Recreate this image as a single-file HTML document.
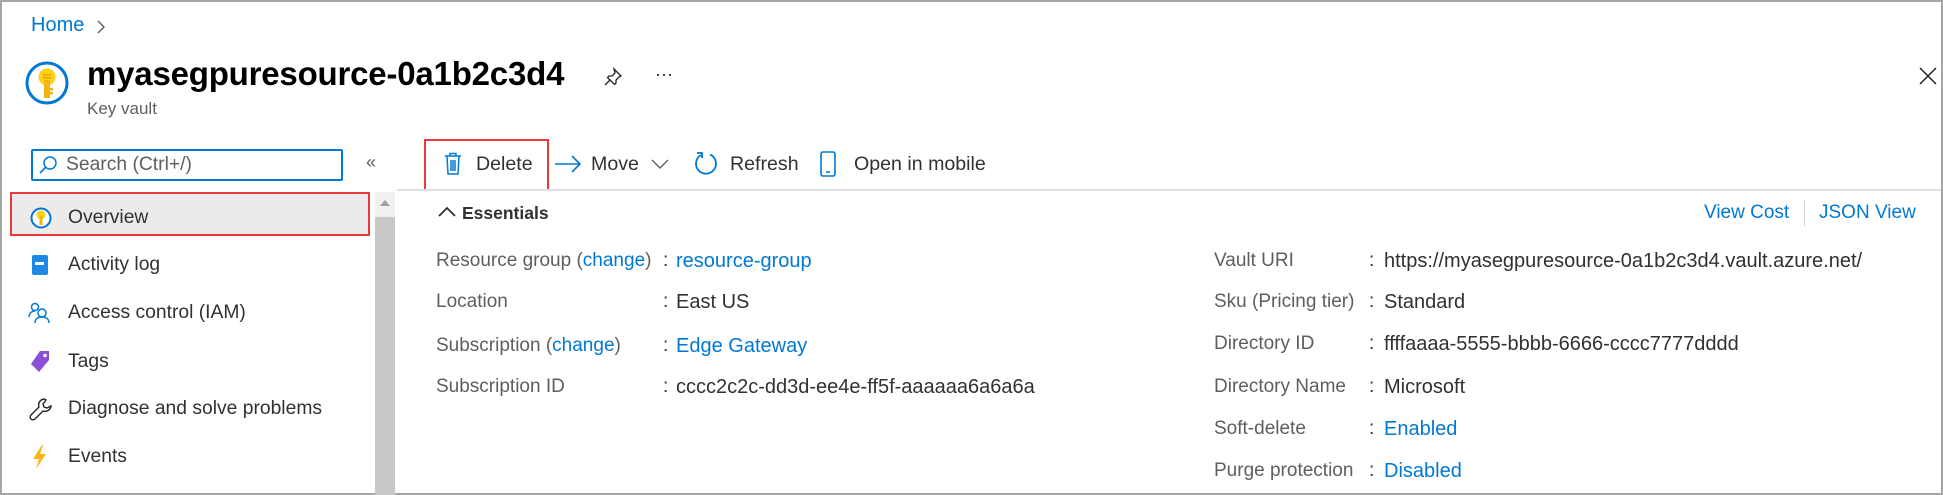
<!DOCTYPE html>
<html><head><meta charset="utf-8"><style>
*{margin:0;padding:0;box-sizing:border-box}
body{width:1943px;height:495px;overflow:hidden;background:#fff;font-family:"Liberation Sans",sans-serif;color:#323130;position:relative}
.a{position:absolute;white-space:nowrap}
.frame{position:absolute;left:0;top:0;width:1943px;height:495px;border:2px solid #a6a6a6}
.t{font-size:19px;line-height:24px;transform:translateY(-12px)}
.p{font-size:19px}
.v{font-size:20px}
.lbl{color:#605e5c}
.lnk{color:#0078d4}
</style></head><body>
<div class="frame"></div>
<div class="a lnk" style="left:31px;top:14px;font-size:20px">Home</div>
<svg class="a" style="left:96px;top:19px" width="10" height="16"><path d="M2 2l6 6-6 6" stroke="#605e5c" stroke-width="1.4" fill="none"/></svg>

<svg class="a" style="left:24px;top:60px" width="46" height="46" viewBox="0 0 46 46"><circle cx="23" cy="23" r="20" fill="#fff" stroke="#0078d4" stroke-width="3"/><circle cx="23" cy="17" r="8.5" fill="#fcd116"/><rect x="20" y="20" width="6" height="18" fill="#f2b515"/><rect x="26" y="28" width="3" height="2.5" fill="#f2b515"/><rect x="26" y="32" width="3" height="2.5" fill="#f2b515"/><rect x="19" y="14" width="8" height="1.5" fill="#e8a100"/><rect x="19" y="17" width="8" height="1.5" fill="#e8a100"/></svg>
<div class="a" style="left:87px;top:55px;font-size:33px;font-weight:bold;color:#000;letter-spacing:-0.2px">myasegpuresource-0a1b2c3d4</div>
<svg class="a" style="left:603px;top:67px" width="20" height="20" viewBox="0 0 20 20"><path d="M11 2l7 7-2 1-3 3 0 3-1.5 1.5-7-7L6 9l3 0 3-3z M7.5 12.5L2 18" stroke="#222" stroke-width="1.3" fill="none"/></svg>
<div class="a" style="left:655px;top:64px;font-size:18px;color:#222">···</div>
<div class="a" style="left:87px;top:99px;font-size:17px;color:#605e5c">Key vault</div>
<svg class="a" style="left:1918px;top:66px" width="20" height="20"><path d="M2 2l16 16M18 2L2 18" stroke="#222" stroke-width="1.5"/></svg>

<div class="a" style="left:31px;top:149px;width:312px;height:32px;border:2px solid #0078d4;border-radius:2px"></div>
<svg class="a" style="left:38px;top:155px" width="20" height="20"><circle cx="12" cy="8" r="6" stroke="#0078d4" stroke-width="1.5" fill="none"/><path d="M8 12l-6 6" stroke="#0078d4" stroke-width="1.6"/></svg>
<div class="a" style="left:66px;top:152px;font-size:19.3px;color:#605e5c;line-height:26px">Search (Ctrl+/)</div>
<div class="a" style="left:366px;top:152px;font-size:18px;color:#605e5c">«</div>

<div class="a" style="left:10px;top:192px;width:360px;height:44px;background:#edebe9;border:2px solid #e8393c"></div>
<div class="a" style="left:375px;top:192px;width:20px;height:303px;background:#c8c8c8"></div>
<div class="a" style="left:375px;top:192px;width:20px;height:25px;background:#f0f0f0"></div>
<svg class="a" style="left:379px;top:198px" width="12" height="10"><path d="M1 8h10L6 2z" fill="#a0a0a0"/></svg>

<svg class="a" style="left:30px;top:206px" width="22" height="24" viewBox="0 0 22 24"><circle cx="11" cy="12" r="9.5" fill="#fff" stroke="#0078d4" stroke-width="2"/><circle cx="11" cy="9" r="4.5" fill="#fcd116"/><rect x="9.5" y="10" width="3" height="9" fill="#f2b515"/></svg>
<div class="a t" style="left:68px;top:218px;font-size:19.3px">Overview</div>
<svg class="a" style="left:31px;top:254px" width="18" height="22"><rect x="1" y="1" width="16" height="20" rx="2" fill="#1e88e5"/><rect x="4" y="8" width="9" height="3" fill="#fff"/></svg>
<div class="a t" style="left:68px;top:265px;font-size:19.3px">Activity log</div>
<svg class="a" style="left:28px;top:302px" width="24" height="22" viewBox="0 0 24 22"><circle cx="7" cy="5" r="3.5" stroke="#0078d4" stroke-width="1.5" fill="none"/><path d="M1 15c0-4 3-6 6-6" stroke="#0078d4" stroke-width="1.5" fill="none"/><circle cx="14" cy="11" r="4" stroke="#0078d4" stroke-width="1.5" fill="none"/><path d="M7 21c0-4 3-6 7-6s7 2 7 6" stroke="#0078d4" stroke-width="1.5" fill="none"/></svg>
<div class="a t" style="left:68px;top:313px;font-size:19.3px">Access control (IAM)</div>
<svg class="a" style="left:30px;top:350px" width="22" height="24" viewBox="0 0 22 24"><path d="M10 1h9v9L9 22 1 14z" fill="#8a4fd6"/><circle cx="15" cy="5.5" r="1.8" fill="#fff"/></svg>
<div class="a t" style="left:68px;top:362px;font-size:19.3px">Tags</div>
<svg class="a" style="left:29px;top:397px" width="24" height="24" viewBox="0 0 24 24"><path d="M15 2a6 6 0 0 0-5 8L2 18a2.5 2.5 0 0 0 4 4l8-8a6 6 0 0 0 8-5l-4 2-3-1-1-3 3-4z" stroke="#222" stroke-width="1.4" fill="none"/></svg>
<div class="a t" style="left:68px;top:409px;font-size:19.3px">Diagnose and solve problems</div>
<svg class="a" style="left:30px;top:444px" width="20" height="26" viewBox="0 0 20 26"><path d="M12 1L3 15h6l-3 10 10-15h-6l3-9z" fill="#fcb316"/></svg>
<div class="a t" style="left:68px;top:457px;font-size:19.3px">Events</div>

<div class="a" style="left:424px;top:139px;width:125px;height:52px;border:2px solid #e8393c"></div>
<svg class="a" style="left:444px;top:152px" width="18" height="24" viewBox="0 0 18 24"><path d="M1 4h16M6 4V1.5h6V4M3 4l1 18h10l1-18M7 8v11M9 8v11M11 8v11" stroke="#0078d4" stroke-width="1.5" fill="none"/></svg>
<div class="a t" style="left:476px;top:164px;font-size:19.6px">Delete</div>
<svg class="a" style="left:554px;top:155px" width="28" height="18"><path d="M1 9h25M18 1l8 8-8 8" stroke="#0078d4" stroke-width="1.6" fill="none"/></svg>
<div class="a t" style="left:591px;top:164px;font-size:19.6px">Move</div>
<svg class="a" style="left:651px;top:158px" width="18" height="12"><path d="M1 2l8 8 8-8" stroke="#605e5c" stroke-width="1.4" fill="none"/></svg>
<svg class="a" style="left:693px;top:151px" width="26" height="26" viewBox="0 0 26 26"><path d="M8 4A10 10 0 1 0 17 3.5" stroke="#0078d4" stroke-width="1.8" fill="none"/><path d="M4 2h5v5" stroke="#0078d4" stroke-width="1.8" fill="none"/></svg>
<div class="a t" style="left:730px;top:164px;font-size:19.6px">Refresh</div>
<svg class="a" style="left:820px;top:151px" width="16" height="26"><rect x="1" y="1" width="14" height="24" rx="2" stroke="#0078d4" stroke-width="1.6" fill="none"/><path d="M6 21h4" stroke="#0078d4" stroke-width="1.5"/></svg>
<div class="a t" style="left:854px;top:164px;font-size:19.6px">Open in mobile</div>
<div class="a" style="left:397px;top:189px;width:1544px;height:2px;background:#e1dfdd"></div>

<svg class="a" style="left:438px;top:206px" width="18" height="12"><path d="M1 10l8-8 8 8" stroke="#323130" stroke-width="1.8" fill="none"/></svg>
<div class="a t" style="left:462px;top:213px;font-weight:bold;font-size:17.5px">Essentials</div>
<div class="a t lnk" style="left:1704px;top:213px">View Cost</div>
<div class="a" style="left:1804px;top:200px;width:1px;height:26px;background:#d0d0d0"></div>
<div class="a t lnk" style="left:1819px;top:213px">JSON View</div>

<div class="a t lbl" style="left:436px;top:261px">Resource group (<span class="lnk">change</span>)</div>
<div class="a t" style="left:663px;top:261px">:</div><div class="a t lnk v" style="left:676px;top:261px">resource-group</div>
<div class="a t lbl" style="left:436px;top:302px">Location</div>
<div class="a t" style="left:663px;top:302px">:</div><div class="a t v" style="left:676px;top:302px">East US</div>
<div class="a t lbl" style="left:436px;top:346px">Subscription (<span class="lnk">change</span>)</div>
<div class="a t" style="left:663px;top:346px">:</div><div class="a t lnk v" style="left:676px;top:346px">Edge Gateway</div>
<div class="a t lbl" style="left:436px;top:387px">Subscription ID</div>
<div class="a t" style="left:663px;top:387px">:</div><div class="a t v" style="left:676px;top:387px">cccc2c2c-dd3d-ee4e-ff5f-aaaaaa6a6a6a</div>

<div class="a t lbl" style="left:1214px;top:261px">Vault URI</div>
<div class="a t" style="left:1369px;top:261px">:</div><div class="a t v" style="left:1384px;top:261px">https://myasegpuresource-0a1b2c3d4.vault.azure.net/</div>
<div class="a t lbl" style="left:1214px;top:302px">Sku (Pricing tier)</div>
<div class="a t" style="left:1369px;top:302px">:</div><div class="a t v" style="left:1384px;top:302px">Standard</div>
<div class="a t lbl" style="left:1214px;top:344px">Directory ID</div>
<div class="a t" style="left:1369px;top:344px">:</div><div class="a t v" style="left:1384px;top:344px">ffffaaaa-5555-bbbb-6666-cccc7777dddd</div>
<div class="a t lbl" style="left:1214px;top:387px">Directory Name</div>
<div class="a t" style="left:1369px;top:387px">:</div><div class="a t v" style="left:1384px;top:387px">Microsoft</div>
<div class="a t lbl" style="left:1214px;top:429px">Soft-delete</div>
<div class="a t" style="left:1369px;top:429px">:</div><div class="a t lnk v" style="left:1384px;top:429px">Enabled</div>
<div class="a t lbl" style="left:1214px;top:471px">Purge protection</div>
<div class="a t" style="left:1369px;top:471px">:</div><div class="a t lnk v" style="left:1384px;top:471px">Disabled</div>
</body></html>
